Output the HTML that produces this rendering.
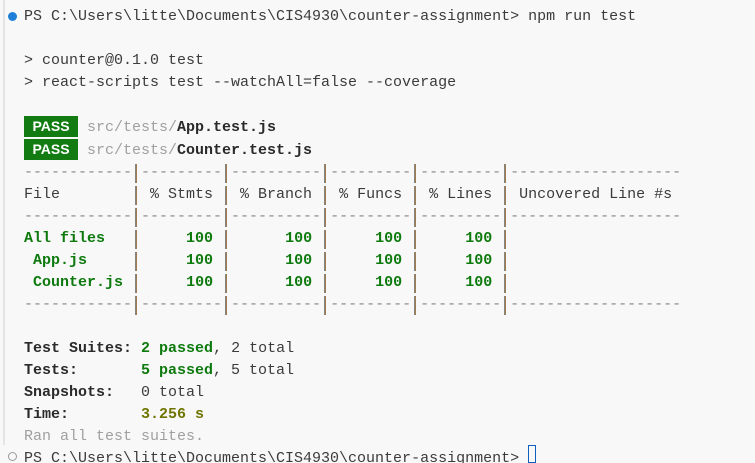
<!DOCTYPE html>
<html><head><meta charset="utf-8"><style>
html,body{margin:0;padding:0;background:#f8f8f8;width:755px;height:463px;overflow:hidden;position:relative}
.bar{position:absolute;left:3px;top:0;width:2px;height:445px;background:#e4e4e4}
pre{position:absolute;left:24px;top:6px;margin:0;font-family:"Liberation Mono",monospace;font-size:15px;line-height:22px;color:#3b3b3b;white-space:pre}
.g{color:#0e7a0e;font-weight:bold}
.b{font-weight:bold;color:#2a2a2a}
.gr{color:#a0a0a0}
.d{color:#888}
.p{display:inline-block;width:9px;height:19px;vertical-align:top;position:relative;top:2px;color:transparent;background:linear-gradient(90deg,transparent 3px,#6a90b0 3px,#a07a50 4px,#a07a50 5px,transparent 5px)}
.y{color:#6f7500;font-weight:bold}
.pass{background:#127c12;color:#fff;font-weight:bold;font-family:"Liberation Sans",sans-serif;font-size:14px;display:inline-block;width:54px;text-align:center;line-height:21px}
.dot{position:absolute;left:8px;top:12px;width:9px;height:9px;border-radius:50%;background:#1f7fd8}
.odot{position:absolute;left:8px;top:452px;width:7px;height:7px;border-radius:50%;border:1px solid #999}
.cur{position:absolute;left:528px;top:445px;width:8px;height:18px;border:1px solid #1060c0;box-sizing:border-box}
</style></head><body>
<div class="bar"></div>
<div class="dot"></div>
<div class="odot"></div>
<div class="cur"></div>
<pre>PS C:\Users\litte\Documents\CIS4930\counter-assignment&gt; npm run test

&gt; counter@0.1.0 test
&gt; react-scripts test --watchAll=false --coverage

<span class="pass">PASS</span> <span class="gr">src/tests/</span><span class="b">App.test.js</span>
<span class="pass">PASS</span> <span class="gr">src/tests/</span><span class="b">Counter.test.js</span>
<span class="d">------------</span><span class="p">|</span><span class="d">---------</span><span class="p">|</span><span class="d">----------</span><span class="p">|</span><span class="d">---------</span><span class="p">|</span><span class="d">---------</span><span class="p">|</span><span class="d">-------------------</span>
File        <span class="p">|</span> % Stmts <span class="p">|</span> % Branch <span class="p">|</span> % Funcs <span class="p">|</span> % Lines <span class="p">|</span> Uncovered Line #s
<span class="d">------------</span><span class="p">|</span><span class="d">---------</span><span class="p">|</span><span class="d">----------</span><span class="p">|</span><span class="d">---------</span><span class="p">|</span><span class="d">---------</span><span class="p">|</span><span class="d">-------------------</span>
<span class="g">All files</span>   <span class="p">|</span> <span class="g">    100</span> <span class="p">|</span> <span class="g">     100</span> <span class="p">|</span> <span class="g">    100</span> <span class="p">|</span> <span class="g">    100</span> <span class="p">|</span>
<span class="g"> App.js</span>     <span class="p">|</span> <span class="g">    100</span> <span class="p">|</span> <span class="g">     100</span> <span class="p">|</span> <span class="g">    100</span> <span class="p">|</span> <span class="g">    100</span> <span class="p">|</span>
<span class="g"> Counter.js</span> <span class="p">|</span> <span class="g">    100</span> <span class="p">|</span> <span class="g">     100</span> <span class="p">|</span> <span class="g">    100</span> <span class="p">|</span> <span class="g">    100</span> <span class="p">|</span>
<span class="d">------------</span><span class="p">|</span><span class="d">---------</span><span class="p">|</span><span class="d">----------</span><span class="p">|</span><span class="d">---------</span><span class="p">|</span><span class="d">---------</span><span class="p">|</span><span class="d">-------------------</span>

<span class="b">Test Suites:</span> <span class="g">2 passed</span>, 2 total
<span class="b">Tests:</span>       <span class="g">5 passed</span>, 5 total
<span class="b">Snapshots:</span>   0 total
<span class="b">Time:</span>        <span class="y">3.256 s</span>
<span class="gr">Ran all test suites.</span>
PS C:\Users\litte\Documents\CIS4930\counter-assignment&gt; </pre>
</body></html>
